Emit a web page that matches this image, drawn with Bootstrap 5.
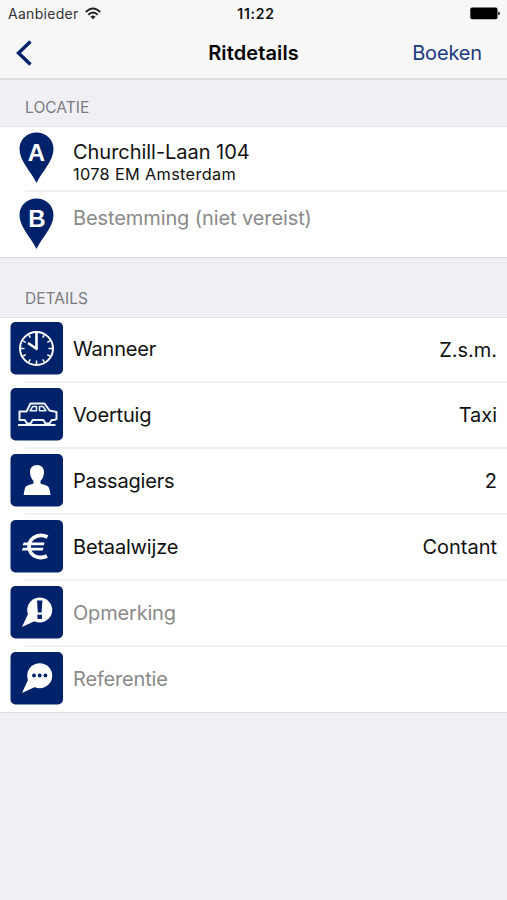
<!DOCTYPE html>
<html lang="nl">
<head>
<meta charset="utf-8">
<meta name="viewport" content="width=device-width, initial-scale=1">
<title>Ritdetails</title>
<link href="https://cdn.jsdelivr.net/npm/bootstrap@5.3.0/dist/css/bootstrap.min.css" rel="stylesheet">
<style>
:root { --navy: #00226b; }
body { background: #efeff4; font-family: Inter, "Liberation Sans", sans-serif; color: #111; font-size: 20px; line-height: 24px; height: 900px; overflow: hidden; }
svg { display: block; flex: none; }
.top-area { background: #f7f7f8; height: 80px; border-bottom: 2px solid #dddde0; }
.status-bar { height: 27px; padding: 0 7px 0 8px; }
.bar-side { flex: 1 1 0; }
.carrier { font-size: 14px; letter-spacing: .3px; color: #333; }
.wifi { margin-left: 6px; }
.clock { font-size: 14px; font-weight: 600; letter-spacing: .75px; color: #111; padding-left: 4px; }
.title-bar { height: 51px; padding: 0 15px; }
.screen-title { font-size: 20px; font-weight: 600; letter-spacing: .12px; color: #000; }
.book { color: #1c3a80; letter-spacing: -.15px; font-size: 20px; padding-right: 10px; }
.section-title { font-size: 15.5px; line-height: 20px; letter-spacing: .05px; color: #7b7b80; padding: 0 25px 8px; margin: 0; font-weight: 400; }
.section-a { height: 46px; }
.section-b { height: 59px; }
.rows { background: #fff; border-top: 1px solid #e4e4e8; border-bottom: 1px solid #dedee2; }
.entry { height: 66px; padding: 0 10px 4px; background: linear-gradient(#f1f1f3, #f1f1f3) 25px 100% / 100% 2px no-repeat; letter-spacing: -.18px; }
.entry:first-child { height: 65px; padding-bottom: 4px; }
.entry:last-child { background: none; height: 65px; padding-bottom: 3px; }
.icon-slot { width: 53px; margin-right: 10px; }
.entry-label { padding-top: 2px; }
.entry:first-child .entry-label { padding-top: 1px; }
.street { letter-spacing: -.04px; padding-top: 9px; }
.address-line { font-size: 16.3px; line-height: 21px; letter-spacing: .34px; }
.destination { letter-spacing: -.1px; padding-bottom: 10px; }
.value { padding-top: 2px; letter-spacing: -.02px; }
.hint { color: #8a8a8a; }
.tile { fill: var(--navy); }
.glyph { font-family: "Liberation Sans", Arial, sans-serif; font-weight: 700; fill: #fff; text-anchor: middle; letter-spacing: 0; }
</style>
</head>
<body>
<header class="top-area">
  <div class="status-bar d-flex align-items-center">
    <div class="bar-side d-flex align-items-center">
      <span class="carrier">Aanbieder</span>
      <svg class="wifi" width="16" height="13" viewBox="0 0 16 13"><g fill="none" stroke="#222" stroke-width="1.9"><path d="M.8 5Q8-2 15.200 5"/><path d="M3.300 7.800Q8 3.400 12.700 7.800"/></g><path d="M5.400 9.700Q8 7.300 10.600 9.700L8 12.300Z" fill="#222"/></svg>
    </div>
    <span class="clock">11:22</span>
    <div class="bar-side d-flex justify-content-end">
      <svg width="30" height="13" viewBox="0 0 30 13"><rect x=".3" y=".6" width="27.200" height="11.600" rx="1.800" fill="#000"/><path d="M28.200 4.500Q30 5 30 6.400T28.200 8.300Z" fill="#222"/></svg>
    </div>
  </div>
  <nav class="title-bar d-flex align-items-center">
    <div class="bar-side"><svg width="18" height="26" viewBox="0 0 18 26"><path d="M15.500 1.500L3.500 13L15.500 24.500" fill="none" stroke="#00226b" stroke-width="3.400"/></svg></div>
    <span class="screen-title">Ritdetails</span>
    <div class="bar-side text-end"><span class="book">Boeken</span></div>
  </nav>
</header>
<main>
  <h2 class="section-title section-a d-flex align-items-end">LOCATIE</h2>
  <div class="rows">
    <div class="entry d-flex align-items-center">
      <div class="icon-slot d-flex justify-content-center"><svg width="35" height="52" viewBox="0 0 35 52"><path class="tile" d="M17.500.500C8 .500.500 7.500.500 17C.500 29.500 12.500 40 17.500 51C22.500 40 34.500 29.500 34.500 17C34.500 7.500 27 .500 17.500.500Z"/><text class="glyph" x="17.500" y="29" font-size="24">A</text></svg></div>
      <div><div class="street">Churchill-Laan 104</div><div class="address-line">1078 EM Amsterdam</div></div>
    </div>
    <div class="entry d-flex align-items-center">
      <div class="icon-slot d-flex justify-content-center"><svg width="35" height="54" viewBox="0 -2 35 54"><path class="tile" d="M17.500.500C8 .500.500 7.500.500 17C.500 29.500 12.500 40 17.500 51C22.500 40 34.500 29.500 34.500 17C34.500 7.500 27 .500 17.500.500Z"/><text class="glyph" x="18" y="28.500" font-size="24">B</text></svg></div>
      <div class="hint destination">Bestemming (niet vereist)</div>
    </div>
  </div>
  <h2 class="section-title section-b d-flex align-items-end">DETAILS</h2>
  <div class="rows">
    <div class="entry d-flex align-items-center">
      <div class="icon-slot"><svg width="53" height="53" viewBox="0 0 53 53"><rect class="tile" x=".5" y="0" width="52.500" height="52.500" rx="5"/><circle cx="26.500" cy="26.500" r="16.500" fill="none" stroke="#fff" stroke-width="2"/><path d="M26.500 11V27M18 21L27.500 27.500" stroke="#fff" stroke-width="2.600" fill="none"/><path d="M34.200 13.100L32.700 15.700M39.900 18.800L37.300 20.300M42 26.500H38.500M39.900 34.200L37.300 32.700M34.200 39.900L32.700 37.300M26.500 42V38.500M18.800 39.900L20.300 37.300M13.100 34.200L15.700 32.700M11 26.500H14.500M13.100 18.800L15.700 20.300M18.800 13.100L20.300 15.700" stroke="#fff" stroke-width="1.500"/></svg></div>
      <span class="entry-label">Wanneer</span><span class="value ms-auto">Z.s.m.</span>
    </div>
    <div class="entry d-flex align-items-center">
      <div class="icon-slot"><svg width="53" height="53" viewBox="0 0 53 53"><rect class="tile" x=".5" y="0" width="52.500" height="52.500" rx="5"/><g fill="none" stroke="#eef4ff" stroke-linejoin="round"><path stroke-width="2" d="M15 32H9.500V23.500H16.500L20.500 15.500H34.500L39.500 22.500L46.500 24V31L44 32H41.500M22 32H34M14.500 31.500L17 35.500H20.500L23 31.500M33 31.500L35.500 35.500H39.500L42 31.500"/><path d="M20 22.800L22.800 18.500H26.500V22.800ZM29.500 18.500H33L36 22.800H29.500Z" stroke-width="1.500"/></g><path d="M8 37H45.500" stroke="#eef4ff" stroke-width="1.800"/></svg></div>
      <span class="entry-label">Voertuig</span><span class="value ms-auto">Taxi</span>
    </div>
    <div class="entry d-flex align-items-center">
      <div class="icon-slot"><svg width="53" height="53" viewBox="0 0 53 53"><rect class="tile" x=".5" y="0" width="52.500" height="52.500" rx="5"/><path fill="#fff" d="M27 11C22.500 11 20 14 20 18C20 22 21.500 25 23.500 27V29.500C20 31 16 31 15 34Q14 37.500 13.700 41H40.500Q40.200 37.500 39 34C38 31 34 31 30.500 29.500V27C32.500 25 34 22 34 18C34 14 31.500 11 27 11Z"/></svg></div>
      <span class="entry-label">Passagiers</span><span class="value ms-auto">2</span>
    </div>
    <div class="entry d-flex align-items-center">
      <div class="icon-slot"><svg width="53" height="53" viewBox="0 0 53 53"><rect class="tile" x=".5" y="0" width="52.500" height="52.500" rx="5"/><path fill="none" stroke="#fff" stroke-width="3.800" d="M37.500 17C34 15.300 30.500 15 27.500 15.800C16 19 16.500 34 27 37C30 37.800 34 37.500 37 36"/><path d="M13.800 22.600H34.500L33.800 25.200H12.500ZM13 27.800H33.500L32.800 30.400H11.800Z" fill="#fff"/></svg></div>
      <span class="entry-label">Betaalwijze</span><span class="value ms-auto">Contant</span>
    </div>
    <div class="entry d-flex align-items-center">
      <div class="icon-slot"><svg width="53" height="53" viewBox="0 0 53 53"><rect class="tile" x=".5" y="0" width="52.500" height="52.500" rx="5"/><circle cx="29.700" cy="24" r="12.500" fill="#fff"/><path d="M18 28L12 41L26 34.500Z" fill="#fff"/><path class="tile" d="M27 14.500H32.400L31.600 26.500H27.800Z"/><rect class="tile" x="27.400" y="28.700" width="4.600" height="4.200"/></svg></div>
      <span class="entry-label hint">Opmerking</span>
    </div>
    <div class="entry d-flex align-items-center">
      <div class="icon-slot"><svg width="53" height="53" viewBox="0 0 53 53"><rect class="tile" x=".5" y="0" width="52.500" height="52.500" rx="5"/><circle cx="29.700" cy="23.700" r="12.500" fill="#fff"/><path d="M18 28L12 41L26 34.500Z" fill="#fff"/><g class="tile"><circle cx="24" cy="23.500" r="1.900"/><circle cx="29.700" cy="23.500" r="1.900"/><circle cx="35.400" cy="23.500" r="1.900"/></g></svg></div>
      <span class="entry-label hint">Referentie</span>
    </div>
  </div>
</main>
<script src="https://cdn.jsdelivr.net/npm/bootstrap@5.3.0/dist/js/bootstrap.bundle.min.js"></script>
</body>
</html>
